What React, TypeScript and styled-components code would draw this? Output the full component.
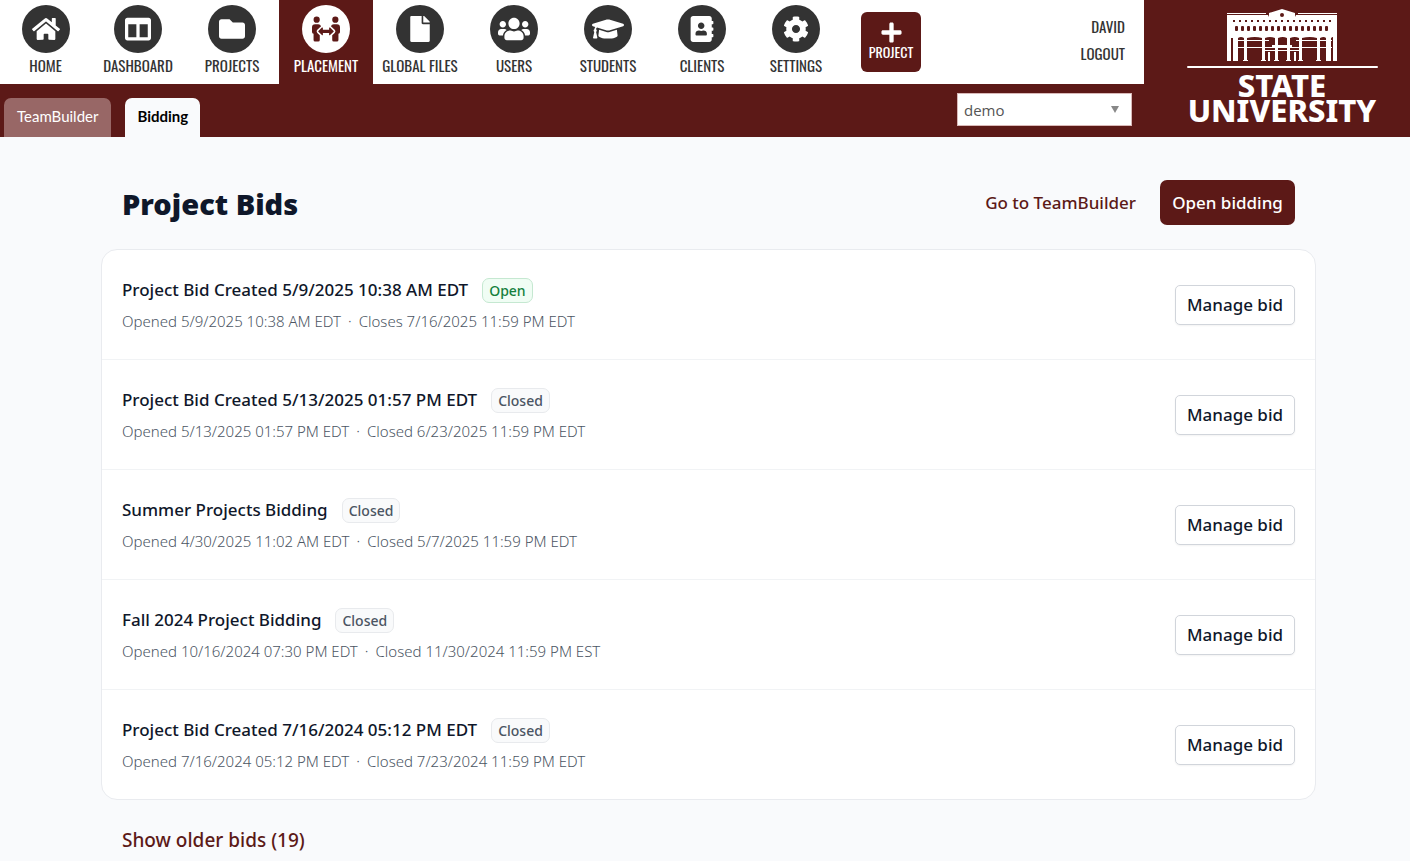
import React from "react";
import styled, { createGlobalStyle, css } from "styled-components";
import {
  FaHome,
  FaColumns,
  FaFolder,
  FaPeopleArrows,
  FaFile,
  FaUsers,
  FaGraduationCap,
  FaAddressBook,
  FaCog,
  FaPlus,
} from "react-icons/fa";
import type { IconType } from "react-icons";

const maroon = "#5c1917";
const ink = "#333333";
const uiFont = `"Segoe UI", "Noto Sans", "Open Sans", sans-serif`;
const narrowFont = `Oswald, "Liberation Sans Narrow", "Roboto Condensed", "DejaVu Sans Condensed", sans-serif`;

const GlobalStyle = createGlobalStyle`
  *, *::before, *::after { box-sizing: border-box; }
  body {
    margin: 0;
    background: #f9fafc;
    font-family: ${uiFont};
    color: #0f172a;
  }
  button, select { font: inherit; }
  a { text-decoration: none; }
`;

const Header = styled.header`
  display: flex;
  background: ${maroon};
`;

const HeaderMain = styled.div`
  flex: 1;
  min-width: 0;
`;

const TopBar = styled.div`
  display: flex;
  align-items: stretch;
  height: 84px;
  background: #ffffff;
`;

const Nav = styled.nav`
  display: flex;
`;

const NavLink = styled.a<{ $active?: boolean }>`
  display: flex;
  flex-direction: column;
  align-items: center;
  width: 94px;
  padding-top: 5px;
  gap: 1px;
  font-family: ${narrowFont};
  font-size: 15px;
  line-height: 22px;
  white-space: nowrap;
  color: ${(p) => (p.$active ? "#ffffff" : ink)};
  background: ${(p) => (p.$active ? maroon : "transparent")};
  &:first-child {
    width: 91px;
  }
`;

const NavIcon = styled.span<{ $active?: boolean }>`
  display: flex;
  align-items: center;
  justify-content: center;
  width: 48px;
  height: 48px;
  border-radius: 50%;
  color: ${(p) => (p.$active ? maroon : "#ffffff")};
  background: ${(p) => (p.$active ? "#ffffff" : ink)};
`;

const AddProject = styled.button`
  display: flex;
  flex-direction: column;
  align-items: center;
  justify-content: center;
  width: 60px;
  height: 60px;
  margin: 12px 0 0 18px;
  padding: 0 0 4px;
  border: 0;
  border-radius: 6px;
  background: ${maroon};
  color: #ffffff;
  font-family: ${narrowFont};
  font-size: 14px;
  line-height: 16px;
`;

const Account = styled.div`
  display: flex;
  flex-direction: column;
  align-items: flex-end;
  margin-left: auto;
  padding: 13px 19px 0 0;

  a {
    font-family: ${narrowFont};
    font-size: 15px;
    line-height: 27px;
    color: ${ink};
  }
`;

const SubBar = styled.div`
  display: flex;
  align-items: flex-end;
  height: 53px;
  padding: 0 12px 0 4px;
`;

const Tab = styled.a<{ $active?: boolean }>`
  height: 39px;
  margin-right: 14px;
  padding: 0 12px;
  border-radius: 7px 7px 0 0;
  font-family: Lato, sans-serif;
  font-size: 15px;
  line-height: 36px;
  ${(p) =>
    p.$active
      ? css`
          background: #f9fafc;
          color: #000000;
          font-weight: 700;
        `
      : css`
          background: #986766;
          color: #ffffff;
          padding: 0 13px;
        `}
`;

const SelectBox = styled.div`
  display: grid;
  align-items: center;
  width: 175px;
  height: 33px;
  margin: 0 0 11px auto;

  select,
  svg {
    grid-area: 1 / 1;
  }
  select {
    width: 100%;
    height: 33px;
    padding: 1px 6px 0;
    border: 1px solid #d9b9b8;
    border-radius: 0;
    appearance: none;
    background: #ffffff;
    color: #555555;
    font-family: "Open Sans", sans-serif;
    font-size: 15px;
  }
  svg {
    justify-self: end;
    margin-right: 13px;
    pointer-events: none;
  }
`;

const Brand = styled.div`
  display: flex;
  flex-direction: column;
  align-items: center;
  width: 266px;
  padding: 8px 0 0 10px;
  color: #ffffff;
  font-size: 31px;
  font-weight: 800;
  line-height: 25px;
  text-align: center;

  svg {
    margin-bottom: 3px;
  }
`;

const Page = styled.main`
  padding: 43px 94px 8px 101px;
`;

const PageHead = styled.div`
  display: flex;
  align-items: center;
  gap: 24px;
  padding: 0 21px;
`;

const PageTitle = styled.h1`
  margin: 2px auto 0 0;
  font-size: 29px;
  font-weight: 900;
  line-height: 36px;
`;

const TextLink = styled.a`
  color: ${maroon};
  font-size: 17px;
  font-weight: 500;
  line-height: 24px;
`;

const PrimaryButton = styled.button`
  height: 45px;
  width: 135px;
  padding: 0;
  border: 0;
  border-radius: 7px;
  background: ${maroon};
  color: #ffffff;
  font-size: 17px;
  font-weight: 500;
  white-space: nowrap;
`;

const BidList = styled.ul`
  margin: 24px 0 0;
  padding: 0;
  list-style: none;
  background: #ffffff;
  border: 1px solid #e9ebef;
  border-radius: 16px;
`;

const BidRow = styled.li`
  display: flex;
  align-items: center;
  justify-content: space-between;
  height: 110px;
  padding: 0 20px;

  &:first-child {
    height: 109px;
  }
  & + & {
    border-top: 1px solid #f1f3f5;
  }
`;

const BidTitleLine = styled.div`
  display: flex;
  align-items: center;
  gap: 14px;
`;

const BidTitle = styled.h2`
  margin: 0;
  font-size: 17px;
  font-weight: 500;
  line-height: 26px;
`;

const Badge = styled.span<{ $open?: boolean }>`
  padding: 0 6px;
  border: 1px solid ${(p) => (p.$open ? "#c5e8d1" : "#e8eaed")};
  border-radius: 7px;
  background: ${(p) => (p.$open ? "#f0fdf4" : "#f9fafb")};
  color: ${(p) => (p.$open ? "#15803d" : "#4b5563")};
  font-size: 14px;
  font-weight: 500;
  line-height: 23px;
`;

const BidDates = styled.p`
  display: flex;
  gap: 7px;
  margin: 7px 0 0;
  color: #4b5563;
  font-size: 15px;
  font-weight: 300;
  line-height: 22px;
`;

const ManageButton = styled.button`
  width: 120px;
  height: 40px;
  padding: 0;
  border: 1px solid #d1d5db;
  border-radius: 5px;
  background: #ffffff;
  color: #0f172a;
  font-size: 17px;
  font-weight: 500;
  box-shadow: 0 1px 2px rgba(0, 0, 0, 0.05);
`;

const OlderBids = styled.button`
  display: block;
  margin: 27px 0 0 21px;
  padding: 0;
  border: 0;
  background: none;
  color: ${maroon};
  font-size: 19px;
  font-weight: 500;
  line-height: 26px;
`;

interface NavEntry {
  label: string;
  icon: IconType;
  size: number;
}

const navEntries: NavEntry[] = [
  { label: "HOME", icon: FaHome, size: 28 },
  { label: "DASHBOARD", icon: FaColumns, size: 26 },
  { label: "PROJECTS", icon: FaFolder, size: 26 },
  { label: "PLACEMENT", icon: FaPeopleArrows, size: 28 },
  { label: "GLOBAL FILES", icon: FaFile, size: 26 },
  { label: "USERS", icon: FaUsers, size: 32 },
  { label: "STUDENTS", icon: FaGraduationCap, size: 32 },
  { label: "CLIENTS", icon: FaAddressBook, size: 26 },
  { label: "SETTINGS", icon: FaCog, size: 26 },
];

interface Bid {
  title: string;
  open?: boolean;
  opened: string;
  closes: string;
}

const bids: Bid[] = [
  {
    title: "Project Bid Created 5/9/2025 10:38 AM EDT",
    open: true,
    opened: "Opened 5/9/2025 10:38 AM EDT",
    closes: "Closes 7/16/2025 11:59 PM EDT",
  },
  {
    title: "Project Bid Created 5/13/2025 01:57 PM EDT",
    opened: "Opened 5/13/2025 01:57 PM EDT",
    closes: "Closed 6/23/2025 11:59 PM EDT",
  },
  {
    title: "Summer Projects Bidding",
    opened: "Opened 4/30/2025 11:02 AM EDT",
    closes: "Closed 5/7/2025 11:59 PM EDT",
  },
  {
    title: "Fall 2024 Project Bidding",
    opened: "Opened 10/16/2024 07:30 PM EDT",
    closes: "Closed 11/30/2024 11:59 PM EST",
  },
  {
    title: "Project Bid Created 7/16/2024 05:12 PM EDT",
    opened: "Opened 7/16/2024 05:12 PM EDT",
    closes: "Closed 7/23/2024 11:59 PM EDT",
  },
];

const windows = [0, 1, 2, 3, 4, 5, 6, 7, 8, 9, 10, 11, 12, 13, 14, 15, 16];

function UniversityMark() {
  return (
    <svg width="192" height="62" viewBox="0 0 192 62" fill="#fff" aria-hidden="true">
      {/* cornice and pediment */}
      <path d="M41 5h39v1H41zM112 5h39v1h-39z" />
      <path d="M41 7h41l1 2V5l13-4 13 4v4l1-2h41v20H41z" />
      <circle cx="96" cy="7" r="2" fill={maroon} />
      {/* dentils and upper windows */}
      <g fill={maroon}>
        {windows.map((i) => (
          <rect key={`d${i}`} x={47 + i * 6} y="12" width="2" height="2" />
        ))}
        {windows.slice(0, 16).map((i) => (
          <rect key={`w${i}`} x={49 + i * 6} y="18" width="3" height="5" rx="1" />
        ))}
      </g>
      {/* columns */}
      <path d="M41 27h4v26h-4zM47 27h5v26h-5zM58 27h3v26h-3zM76 27h3v26h-3zM89 27h3v26h-3zM101 27h3v26h-3zM113 27h3v26h-3zM131 27h3v26h-3zM140 27h5v26h-5zM147 27h4v26h-4z" />
      <path d="M41 27h110v2q-4-1-6 1h-5q-2-2-6 0h-3q-7-2-15 0h-3q-4-2-9 0h-3q-4-2-9 0h-3q-5-2-10 0h-3q-7-2-15 0h-3q-3-2-6 0H41z" />
      {/* balconies */}
      <path d="M47 32h36v1H47zM110 32h36v1h-36zM47 39h40v1H47zM106 39h40v1h-40zM86 37h20v3H86zM79 42h34v1H79zM82 44h2v9h-2zM108 44h2v9h-2z" />
      <path d="M57 52h5v1h-5zM75 52h5v1h-5zM88 52h5v1h-5zM100 52h5v1h-5zM112 52h5v1h-5zM130 52h5v1h-5z" />
      <rect x="1" y="58" width="191" height="2" rx="1" />
    </svg>
  );
}

export default function App() {
  return (
    <>
      <GlobalStyle />
      <Header>
        <HeaderMain>
          <TopBar>
            <Nav>
              {navEntries.map(({ label, icon: Icon, size }) => {
                const active = label === "PLACEMENT";
                return (
                  <NavLink key={label} href="#" $active={active}>
                    <NavIcon $active={active}>
                      <Icon size={size} />
                    </NavIcon>
                    {label}
                  </NavLink>
                );
              })}
            </Nav>
            <AddProject type="button">
              <FaPlus size={23} />
              PROJECT
            </AddProject>
            <Account>
              <a href="#">DAVID</a>
              <a href="#">LOGOUT</a>
            </Account>
          </TopBar>
          <SubBar>
            <Tab href="#">TeamBuilder</Tab>
            <Tab href="#" $active>
              Bidding
            </Tab>
            <SelectBox>
              <select aria-label="Program" defaultValue="demo">
                <option value="demo">demo</option>
              </select>
              <svg width="8" height="7" viewBox="0 0 8 7" aria-hidden="true">
                <path d="M0 0h8L4 7z" fill="#888" />
              </svg>
            </SelectBox>
          </SubBar>
        </HeaderMain>
        <Brand>
          <UniversityMark />
          <span>STATE</span>
          <span>UNIVERSITY</span>
        </Brand>
      </Header>
      <Page>
        <PageHead>
          <PageTitle>Project Bids</PageTitle>
          <TextLink href="#">Go to TeamBuilder</TextLink>
          <PrimaryButton type="button">Open bidding</PrimaryButton>
        </PageHead>
        <BidList>
          {bids.map((bid) => (
            <BidRow key={bid.title}>
              <div>
                <BidTitleLine>
                  <BidTitle>{bid.title}</BidTitle>
                  <Badge $open={bid.open}>{bid.open ? "Open" : "Closed"}</Badge>
                </BidTitleLine>
                <BidDates>
                  <span>{bid.opened}</span>
                  <span>·</span>
                  <span>{bid.closes}</span>
                </BidDates>
              </div>
              <ManageButton type="button">Manage bid</ManageButton>
            </BidRow>
          ))}
        </BidList>
        <OlderBids type="button">Show older bids (19)</OlderBids>
      </Page>
    </>
  );
}
